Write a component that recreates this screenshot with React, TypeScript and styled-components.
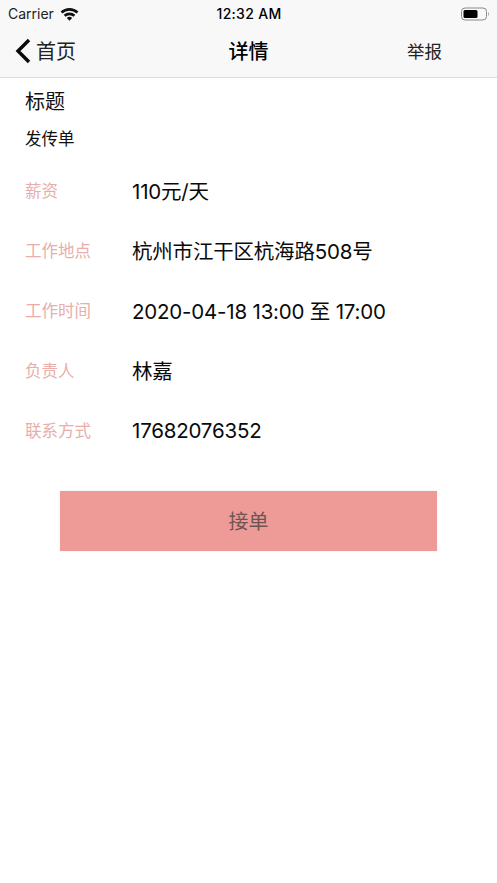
import React from 'react';
import styled, { createGlobalStyle } from 'styled-components';

const cjk = `"Inter", "Noto Sans CJK SC", sans-serif`;

const GlobalStyle = createGlobalStyle`
  html, body {
    margin: 0;
    padding: 0;
    background: #fff;
  }
`;

const Screen = styled.div`
  width: 497px;
  height: 883px;
  display: flex;
  flex-direction: column;
  background: #fff;
  color: #000;
  font-family: ${cjk};
  overflow: hidden;
`;

const Header = styled.header`
  background: #f8f8f8;
  border-bottom: 1px solid #dcdcdc;
  height: 77px;
  flex-shrink: 0;
  display: flex;
  flex-direction: column;
`;

const StatusBar = styled.div`
  height: 27px;
  padding: 0 7px 0 8px;
  display: grid;
  grid-template-columns: 1fr auto 1fr;
  align-items: center;
  font-size: 14px;
`;

const Carrier = styled.div`
  display: flex;
  align-items: center;
  gap: 6px;
  color: #222;
`;

const Clock = styled.div`
  font-weight: 500;
  letter-spacing: 0.3px;
`;

const Battery = styled.div`
  justify-self: end;
  display: flex;
`;

const NavBar = styled.nav`
  flex: 1;
  display: grid;
  grid-template-columns: 1fr auto 1fr;
  align-items: center;
  padding: 0 15px 3px;
`;

const BackLink = styled.div`
  display: flex;
  align-items: center;
  gap: 5px;
  font-size: 20px;
  color: #222;
`;

const NavTitle = styled.div`
  font-size: 20px;
  font-weight: 500;
`;

const ReportLink = styled.div`
  justify-self: end;
  margin-right: 40px;
  font-size: 17.5px;
  color: #222;
`;

const Content = styled.main`
  display: flex;
  flex-direction: column;
  padding: 11px 25px 0;
`;

const SectionLabel = styled.div`
  font-size: 20px;
  line-height: 26px;
  color: #111;
`;

const SectionValue = styled.div`
  font-size: 16.5px;
  line-height: 24px;
  margin-top: 12px;
  color: #111;
`;

const Rows = styled.div`
  display: flex;
  flex-direction: column;
  gap: 30px;
  margin-top: 25px;
`;

const Row = styled.div`
  display: grid;
  grid-template-columns: 107px 1fr;
  align-items: center;
  height: 30px;
`;

const RowLabel = styled.div`
  font-size: 16.5px;
  color: #e8aeaa;
  margin-top: -2px;
`;

const RowValue = styled.div`
  font-size: 20.5px;
  letter-spacing: -0.2px;
  color: #0a0a0a;
  margin-top: -2px;
`;

const Action = styled.button`
  align-self: center;
  width: 377px;
  height: 60px;
  margin-top: 45px;
  padding: 0 0 2px;
  border: 0;
  border-radius: 0;
  background: #ee9a97;
  color: #6e5554;
  font-family: ${cjk};
  font-size: 20px;
  box-shadow: 0 0 2px rgba(0, 0, 0, 0.08);
`;

const rows = [
  { label: '薪资', value: '110元/天' },
  { label: '工作地点', value: '杭州市江干区杭海路508号' },
  { label: '工作时间', value: '2020-04-18 13:00 至 17:00' },
  { label: '负责人', value: '林嘉' },
  { label: '联系方式', value: '17682076352' },
];

const WifiIcon = () => (
  <svg width="19" height="14" viewBox="0 0 19 14">
    <path d="M0.6 4.6 A13 13 0 0 1 18.4 4.6 L16.6 6.5 A10.4 10.4 0 0 0 2.4 6.5 Z" fill="#111" />
    <path d="M3.7 7.8 A8.5 8.5 0 0 1 15.3 7.8 L13.5 9.7 A6 6 0 0 0 5.5 9.7 Z" fill="#111" />
    <path d="M6.8 11 A4 4 0 0 1 12.2 11 L9.5 13.8 Z" fill="#111" />
  </svg>
);

const BatteryIcon = () => (
  <svg width="29" height="14" viewBox="0 0 29 14">
    <rect x="0.5" y="1" width="25" height="12" rx="3.5" fill="none" stroke="#8a8a8a" />
    <rect x="2.5" y="3" width="14" height="8" rx="1.5" fill="#000" />
    <path d="M27 5 C28.2 5.4 28.2 8.6 27 9 Z" fill="#9a9a9a" />
  </svg>
);

const BackChevron = () => (
  <svg width="16" height="26" viewBox="0 0 16 26">
    <path d="M14 2 L3 13 L14 24" fill="none" stroke="#0a0a0a" strokeWidth="3.4" />
  </svg>
);

export default function App() {
  return (
    <Screen>
      <GlobalStyle />
      <Header>
        <StatusBar>
          <Carrier>
            Carrier
            <WifiIcon />
          </Carrier>
          <Clock>12:32 AM</Clock>
          <Battery>
            <BatteryIcon />
          </Battery>
        </StatusBar>
        <NavBar>
          <BackLink>
            <BackChevron />
            首页
          </BackLink>
          <NavTitle>详情</NavTitle>
          <ReportLink>举报</ReportLink>
        </NavBar>
      </Header>
      <Content>
        <SectionLabel>标题</SectionLabel>
        <SectionValue>发传单</SectionValue>
        <Rows>
          {rows.map((row) => (
            <Row key={row.label}>
              <RowLabel>{row.label}</RowLabel>
              <RowValue>{row.value}</RowValue>
            </Row>
          ))}
        </Rows>
        <Action>接单</Action>
      </Content>
    </Screen>
  );
}
